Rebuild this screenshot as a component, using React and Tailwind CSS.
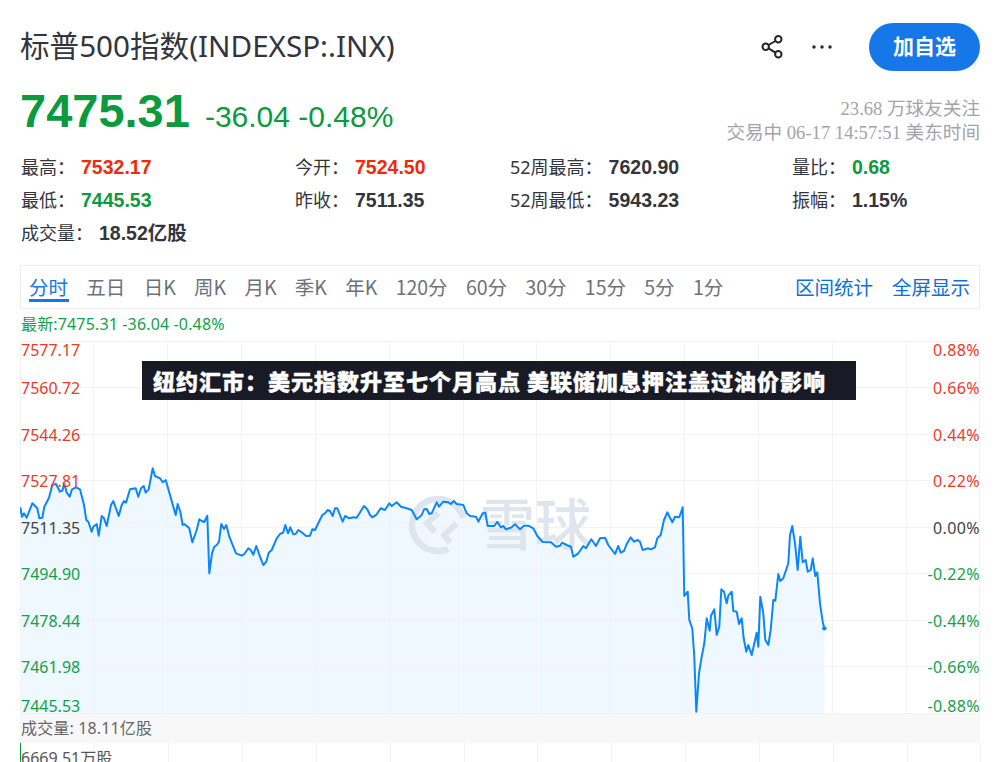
const sans = 'font-["Noto_Sans","Noto_Sans_CJK_SC",sans-serif]';
const arial = 'font-["Liberation_Sans","Noto_Sans_CJK_SC",sans-serif]';

// traced from the chart, grouped in three runs with their own scale
const runA = [[61,172],[66,200],[72,190],[80,203],[97,160],[112,175],[118,205],[127,203],[133,170],[147,143],[157,105],[168,102],[180,125],[187,122],[193,100],[200,128],[209,140],[216,118],[228,112],[240,118],[252,165],[259,210],[265,215],[275,245],[280,230],[290,222],[296,257],[305,198],[312,205],[320,228],[333,165],[340,153],[356,198],[365,165],[372,153],[378,158],[390,118],[407,115],[415,140],[423,115],[431,108],[437,128],[446,118],[458,55],[465,78],[480,85],[488,97],[497,90],[510,135],[527,195],[533,162],[541,185],[548,225],[553,222],[568,235],[577,277],[590,240],[598,208],[605,213],[613,216],[622,197],[628,370],[636,310],[643,290],[650,285],[657,275],[664,222],[672,237],[679,225],[688,260],[708,310],[725,317],[733,312],[745,295],[752,300],[760,314],[769,288],[780,320],[790,345],[799,335],[806,308],[815,300],[830,265],[840,252],[850,247],[856,225],[864,250],[871,232],[880,253],[887,252],[895,240],[905,247],[918,258],[930,257],[937,238],[945,240],[957,215],[967,195],[975,190],[983,180],[990,183],[998,198],[1005,175],[1012,175]];
const runB = [[0,135],[8,155],[15,138],[28,145],[40,142],[50,143],[72,108],[82,118],[90,135],[97,142],[110,133],[122,115],[135,120],[148,100],[155,108],[170,97],[183,110],[200,115],[215,120],[230,148],[245,135],[252,118],[260,117],[268,132],[275,130],[290,97],[297,110],[310,95],[325,97],[333,102],[341,93],[350,102],[370,105],[380,130],[390,138],[408,140],[415,155],[428,130],[436,128],[443,168],[463,168],[472,155],[482,172],[490,168],[498,178],[515,172],[525,163],[540,178],[552,167],[565,167],[580,175],[592,198],[608,216],[633,217],[648,230],[660,227],[666,218],[680,225],[693,230],[700,260],[715,250],[730,228],[738,235],[754,208],[768,228],[780,205],[795,203],[805,225],[825,252],[835,228],[842,248],[852,243],[860,222],[872,202],[882,215],[893,210],[900,215],[908,240],[925,235],[932,238],[945,232],[952,205],[962,195],[972,150],[982,127],[997,157],[1005,140],[1018,142]];
const runC = [[68,22],[73,288],[83,275],[88,360],[97,385],[103,470],[109,635],[117,520],[125,470],[133,430],[140,355],[149,392],[153,347],[163,328],[170,405],[178,380],[184,268],[192,275],[200,310],[205,287],[215,275],[220,333],[230,335],[237,372],[245,355],[251,415],[259,455],[265,435],[275,465],[290,398],[295,440],[301,290],[310,340],[316,420],[325,435],[332,390],[340,300],[346,302],[355,222],[361,243],[370,235],[385,190],[390,105],[397,78],[405,130],[413,210],[421,110],[428,187],[437,180],[443,215],[452,210],[458,175],[466,228],[472,217],[480,310],[488,365],[493,385]];

const toPage = (run, ox, oy) => run.map(([x, y]) => [ox + x / 3, oy + y / 3]);
const points = [...toPage(runA, 0, 450), ...toPage(runB, 340, 470), ...toPage(runC, 660, 500)];
const linePath = points.map(([x, y]) => `${x.toFixed(1)},${y.toFixed(1)}`).join(' ');
const last = points[points.length - 1];
const areaPath = `20.5,714 ${linePath} ${last[0].toFixed(1)},714`;

const verticals = [93.5, 167.5, 241.5, 315.5, 389.5, 463.5, 536.5, 610.5, 684.5, 758.5, 832.5, 906.5, 979.5];
const horizontals = [341.5, 387.5, 434.5, 480.5, 527.5, 573.5, 620.5, 666.5, 713.5];

const tabs = ['五日', '日K', '周K', '月K', '季K', '年K', '120分', '60分', '30分', '15分', '5分', '1分'];

const leftLabels = [
  { text: '7577.17', y: 'top-0', color: 'text-[#ee3a1f]' },
  { text: '7560.72', y: 'top-[38px]', color: 'text-[#ee3a1f]' },
  { text: '7544.26', y: 'top-[85px]', color: 'text-[#ee3a1f]' },
  { text: '7527.81', y: 'top-[131px]', color: 'text-[#ee3a1f]' },
  { text: '7511.35', y: 'top-[178px]', color: 'text-[#444]' },
  { text: '7494.90', y: 'top-[224px]', color: 'text-[#12a14b]' },
  { text: '7478.44', y: 'top-[271px]', color: 'text-[#12a14b]' },
  { text: '7461.98', y: 'top-[317px]', color: 'text-[#12a14b]' },
  { text: '7445.53', y: 'top-[356px]', color: 'text-[#12a14b]' },
];
const rightLabels = [
  { text: '0.88%', y: 'top-0', color: 'text-[#ee3a1f]' },
  { text: '0.66%', y: 'top-[38px]', color: 'text-[#ee3a1f]' },
  { text: '0.44%', y: 'top-[85px]', color: 'text-[#ee3a1f]' },
  { text: '0.22%', y: 'top-[131px]', color: 'text-[#ee3a1f]' },
  { text: '0.00%', y: 'top-[178px]', color: 'text-[#444]' },
  { text: '-0.22%', y: 'top-[224px]', color: 'text-[#12a14b]' },
  { text: '-0.44%', y: 'top-[271px]', color: 'text-[#12a14b]' },
  { text: '-0.66%', y: 'top-[317px]', color: 'text-[#12a14b]' },
  { text: '-0.88%', y: 'top-[356px]', color: 'text-[#12a14b]' },
];

const Stat = ({ label, value, color = 'text-[#33353c]' }) => (
  <div className={`flex items-center h-[33px] text-[18px] text-[#33353c] ${sans}`}>
    <span>{label}</span>
    <span className={`ml-[6px] font-bold text-[19.5px] ${arial} ${color}`}>{value}</span>
  </div>
);

const Chart = () => (
  <div className="relative h-[373px] mt-[7px]">
    <svg className="absolute inset-0" width="960" height="373" viewBox="20 341 960 373">
      <polygon points={areaPath} fill="#eff7ff" />
      {verticals.map((x) => <line key={x} x1={x} x2={x} y1="341" y2="714" stroke="#f1f3f6" />)}
      {horizontals.map((y) => <line key={y} x1="20" x2="980" y1={y} y2={y} stroke="#f1f3f6" />)}
      <line x1="20.5" x2="20.5" y1="341" y2="714" stroke="#f1f3f6" />
      <circle cx="438" cy="525" r="26" fill="none" stroke="#dfe5ee" strokeWidth="6.5" strokeDasharray="125 38.4" transform="rotate(67 438 525)" />
      <path d="M438.3 513.3 L426.7 523.3 L435 531.7 M456.7 523.3 L444.3 535 L450 542.7" fill="none" stroke="#dfe5ee" strokeWidth="6" />
      <text x="479" y="545" fontSize="56" fontWeight="500" fill="#dfe5ee" fontFamily="Noto Sans CJK SC, sans-serif">雪球</text>
      <polyline points={linePath} fill="none" stroke="#0a86ff" strokeWidth="2" strokeLinejoin="round" />
      <circle cx={last[0]} cy={last[1]} r="2.2" fill="#0a86ff" />
    </svg>
    {leftLabels.map((l) => (
      <span key={l.text} className={`absolute left-px text-[16px] leading-[18px] ${sans} ${l.y} ${l.color}`}>{l.text}</span>
    ))}
    {rightLabels.map((l) => (
      <span key={l.text} className={`absolute right-0 text-[16px] leading-[18px] tracking-[0.4px] ${sans} ${l.y} ${l.color}`}>{l.text}</span>
    ))}
  </div>
);

export default function App() {
  return (
    <div className="relative w-[999px] h-[762px] overflow-hidden bg-white pl-5 pr-[19px]">
      {/* Header */}
      <div className="flex items-center justify-between pt-[22px] h-[71px] pb-px">
        <h1 className={`text-[29.6px] leading-[46px] text-[#33353c] ${sans}`}>标普500指数(INDEXSP:.INX)</h1>
        <div className="flex items-center pt-px">
          <svg width="24" height="24" viewBox="760 35 24 24" fill="none" stroke="#22242a" strokeWidth="2" className="mr-[28px]">
            <circle cx="778.3" cy="39.3" r="3.2" />
            <circle cx="765.7" cy="46.7" r="3.2" />
            <circle cx="778.3" cy="54.3" r="3.2" />
            <path d="M768.5 45 L775.5 41 M768.5 48.4 L775.5 52.6" />
          </svg>
          <svg width="20" height="4" viewBox="0 0 20 4" className="mr-[37px]">
            <circle cx="2" cy="2" r="1.7" fill="#22242a" />
            <circle cx="10" cy="2" r="1.7" fill="#22242a" />
            <circle cx="18" cy="2" r="1.7" fill="#22242a" />
          </svg>
          <button className={`w-[111px] h-[48px] rounded-full bg-[#1677e8] text-white text-[21px] font-bold ${arial}`}>加自选</button>
        </div>
      </div>

      {/* Price */}
      <div className="flex items-end justify-between h-[75px]">
        <div className={`flex items-baseline gap-[15px] ${arial} text-[#0b9a3e] pb-[7px]`}>
          <span className="text-[47px] font-bold leading-[56px]">7475.31</span>
          <span className="text-[30px] leading-[34px]">-36.04 -0.48%</span>
        </div>
        <div className={`text-right text-[18.6px] leading-[24px] pb-px text-[#a3a3a8] font-["Liberation_Serif","Noto_Sans_CJK_SC",serif]`}>
          <div>23.68 万球友关注</div>
          <div>交易中 06-17 14:57:51 美东时间</div>
        </div>
      </div>

      {/* Stats */}
      <div className="grid grid-cols-[274px_215px_282px_1fr] mt-[5px] pl-px">
        <Stat label="最高：" value="7532.17" color="text-[#f22a0c]" />
        <Stat label="今开：" value="7524.50" color="text-[#f22a0c]" />
        <Stat label="52周最高：" value="7620.90" />
        <Stat label="量比：" value="0.68" color="text-[#0b9a3e]" />
        <Stat label="最低：" value="7445.53" color="text-[#0b9a3e]" />
        <Stat label="昨收：" value="7511.35" />
        <Stat label="52周最低：" value="5943.23" />
        <Stat label="振幅：" value="1.15%" />
        <Stat label="成交量：" value="18.52亿股" />
      </div>

      {/* Tabs */}
      <div className={`flex items-center justify-between h-[44px] mt-[15px] border border-[#ececee] pl-2 pr-[9px] text-[19.5px] font-["Noto_Sans_CJK_SC",sans-serif]`}>
        <div className="flex items-center gap-[18.3px] text-[#6d727a]">
          <span className="relative text-[#1677e8]">
            分时
            <span className="absolute left-0 -right-px top-[27px] h-[3px] bg-[#1677e8]" />
          </span>
          {tabs.map((t) => <span key={t}>{t}</span>)}
        </div>
        <div className="flex gap-[19px] text-[#0d6fd8]">
          <span>区间统计</span>
          <span>全屏显示</span>
        </div>
      </div>

      <div className={`h-[25px] pl-px pt-[3px] text-[16px] leading-[24px] tracking-[0.15px] text-[#12a14b] ${sans}`}>最新:7475.31 -36.04 -0.48%</div>

      <Chart />

      {/* Volume */}
      <div className={`h-[29px] bg-[#f8f8f8] pl-px text-[16px] leading-[29px] tracking-[0.15px] text-[#666] ${sans}`}>成交量: 18.11亿股</div>
      <div className="relative h-[19px] border-l border-[#0b9a3e]">
        <svg className="absolute inset-0" width="960" height="19" viewBox="20 743 960 19">
          {verticals.map((x) => <line key={x} x1={x} x2={x} y1="743" y2="762" stroke="#f1f3f6" />)}
        </svg>
        <span className={`absolute left-0 top-[4px] text-[16px] leading-[22px] text-[#555] ${sans}`}>6669.51万股</span>
      </div>

      {/* News banner */}
      <div className={`absolute left-[142px] top-[361px] w-[714px] h-[39px] bg-[#181a26] pl-[11px] text-[22px] leading-[38px] font-black tracking-[1px] text-white whitespace-nowrap [-webkit-text-stroke:0.4px_white] font-["Noto_Sans_CJK_SC",sans-serif]`}>
        纽约汇市：美元指数升至七个月高点 美联储加息押注盖过油价影响
      </div>
    </div>
  );
}
